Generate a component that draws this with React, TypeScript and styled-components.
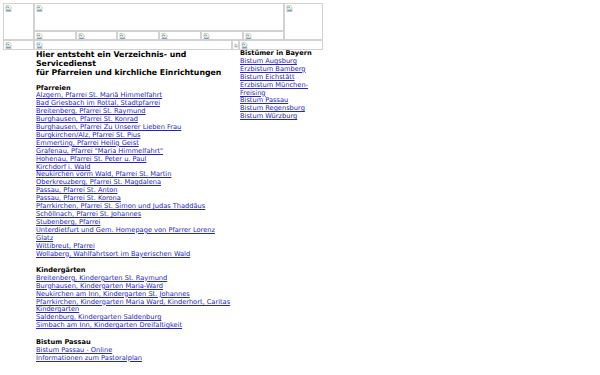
import React from "react";
import styled, { createGlobalStyle } from "styled-components";

const Global = createGlobalStyle`
  html, body { margin: 0; padding: 0; background: #fff; }
  body {
    padding: 3px;
    font-family: "DejaVu Sans", Verdana, sans-serif;
    font-size: 6.65px;
    line-height: 7.9px;
    color: #000;
  }
`;

const Page = styled.div`
  width: 320px;
  display: flex;
  flex-direction: column;
`;

const TopGrid = styled.div`
  display: grid;
  grid-template-columns: 31px 250px 39px;
  grid-template-rows: 28px 9px;
`;

const Strip = styled.div`
  display: flex;
`;

const NavRow = styled.div`
  display: grid;
  grid-template-columns: 31px 198px 7px 84px;
  height: 10px;
`;

const Broken = styled.div<{ $rows?: number; $w?: number }>`
  box-sizing: border-box;
  border: 1px solid #d2d2d2;
  grid-row: span ${(p) => p.$rows ?? 1};
  ${(p) => (p.$w ? `width: ${p.$w}px; flex: none;` : "")}
  padding: 1px 0 0 1px;
  overflow: hidden;
  display: flex;
  align-items: flex-start;
`;

const Content = styled.div`
  display: grid;
  grid-template-columns: 31px 198px 7px 84px;
`;

const Left = styled.div`
  grid-column: 2;
  padding-left: 2px;
`;

const Right = styled.div`
  grid-column: 4;
  padding-left: 1px;
`;

const Title = styled.div`
  font-weight: bold;
  font-size: 7.8px;
  line-height: 9px;
  margin-bottom: 7.5px;
`;

const Section = styled.div`
  margin-bottom: 8.5px;
`;

const SectionTitle = styled.div`
  font-weight: bold;
`;

const Link = styled.a`
  display: block;
  color: #2424c0;
  text-decoration: underline;
`;

const Icon = () => (
  <svg width="7" height="7" viewBox="0 0 16 16">
    <path d="M2 1h8l4 4v4l-3 2-3-2-3 2-3-2z" fill="#f4f4f4" stroke="#9a9a9a" strokeWidth="1" />
    <path d="M2 12l3-2 3 2 3-2 3 2v3H2z" fill="#f4f4f4" stroke="#9a9a9a" strokeWidth="1" />
    <path d="M3 7l3-3 3 3" fill="none" stroke="#4a9a3a" strokeWidth="2" />
    <rect x="3" y="12" width="10" height="2" fill="#3a8fd0" />
  </svg>
);

const Img = (p: { rows?: number; w?: number }) => (
  <Broken $rows={p.rows} $w={p.w}>
    <Icon />
  </Broken>
);

const pfarreien = [
  "Alzgern, Pfarrei St. Mariä Himmelfahrt",
  "Bad Griesbach im Rottal, Stadtpfarrei",
  "Breitenberg, Pfarrei St. Raymund",
  "Burghausen, Pfarrei St. Konrad",
  "Burghausen, Pfarrei Zu Unserer Lieben Frau",
  "Burgkirchen/Alz, Pfarrei St. Pius",
  "Emmerting, Pfarrei Heilig Geist",
  'Grafenau, Pfarrei "Maria Himmelfahrt"',
  "Hohenau, Pfarrei St. Peter u. Paul",
  "Kirchdorf i. Wald",
  "Neukirchen vorm Wald, Pfarrei St. Martin",
  "Oberkreuzberg, Pfarrei St. Magdalena",
  "Passau, Pfarrei St. Anton",
  "Passau, Pfarrei St. Korona",
  "Pfarrkirchen, Pfarrei St. Simon und Judas Thaddäus",
  "Schöllnach, Pfarrei St. Johannes",
  "Stubenberg, Pfarrei",
  "Unterdietfurt und Gem. Homepage von Pfarrer Lorenz Glatz",
  "Wittibreut, Pfarrei",
  "Wollaberg, Wahlfahrtsort im Bayerischen Wald",
];

const kindergaerten = [
  "Breitenberg, Kindergarten St. Raymund",
  "Burghausen, Kindergarten Maria-Ward",
  "Neukirchen am Inn, Kindergarten St. Johannes",
  "Pfarrkirchen, Kindergarten Maria Ward, Kinderhort, Caritas Kindergarten",
  "Saldenburg, Kindergarten Saldenburg",
  "Simbach am Inn, Kindergarten Dreifaltigkeit",
];

const passau = ["Bistum Passau - Online", "Informationen zum Pastoralplan"];

const bistuemer = [
  "Bistum Augsburg",
  "Erzbistum Bamberg",
  "Bistum Eichstätt",
  "Erzbistum München-Freising",
  "Bistum Passau",
  "Bistum Regensburg",
  "Bistum Würzburg",
];

export default function App() {
  return (
    <>
      <Global />
      <Page>
        <TopGrid>
          <Img rows={2} />
          <Img />
          <Img rows={2} />
          <Strip>
            <Img w={42} />
            <Img w={41} />
            <Img w={42} />
            <Img w={42} />
            <Img w={42} />
            <Img w={41} />
          </Strip>
        </TopGrid>
        <NavRow>
          <Img />
          <Img />
          <Img />
          <Img />
        </NavRow>
        <Content>
          <Left>
            <Title>
              Hier entsteht ein Verzeichnis- und Servicedienst
              <br />
              für Pfarreien und kirchliche Einrichtungen
            </Title>
            <Section>
              <SectionTitle>Pfarreien</SectionTitle>
              {pfarreien.map((t) => (
                <Link key={t} href="#">{t}</Link>
              ))}
            </Section>
            <Section>
              <SectionTitle>Kindergärten</SectionTitle>
              {kindergaerten.map((t) => (
                <Link key={t} href="#">{t}</Link>
              ))}
            </Section>
            <Section>
              <SectionTitle>Bistum Passau</SectionTitle>
              {passau.map((t) => (
                <Link key={t} href="#">{t}</Link>
              ))}
            </Section>
          </Left>
          <Right>
            <SectionTitle>Bistümer in Bayern</SectionTitle>
            {bistuemer.map((t) => (
              <Link key={t} href="#">{t}</Link>
            ))}
          </Right>
        </Content>
      </Page>
    </>
  );
}
